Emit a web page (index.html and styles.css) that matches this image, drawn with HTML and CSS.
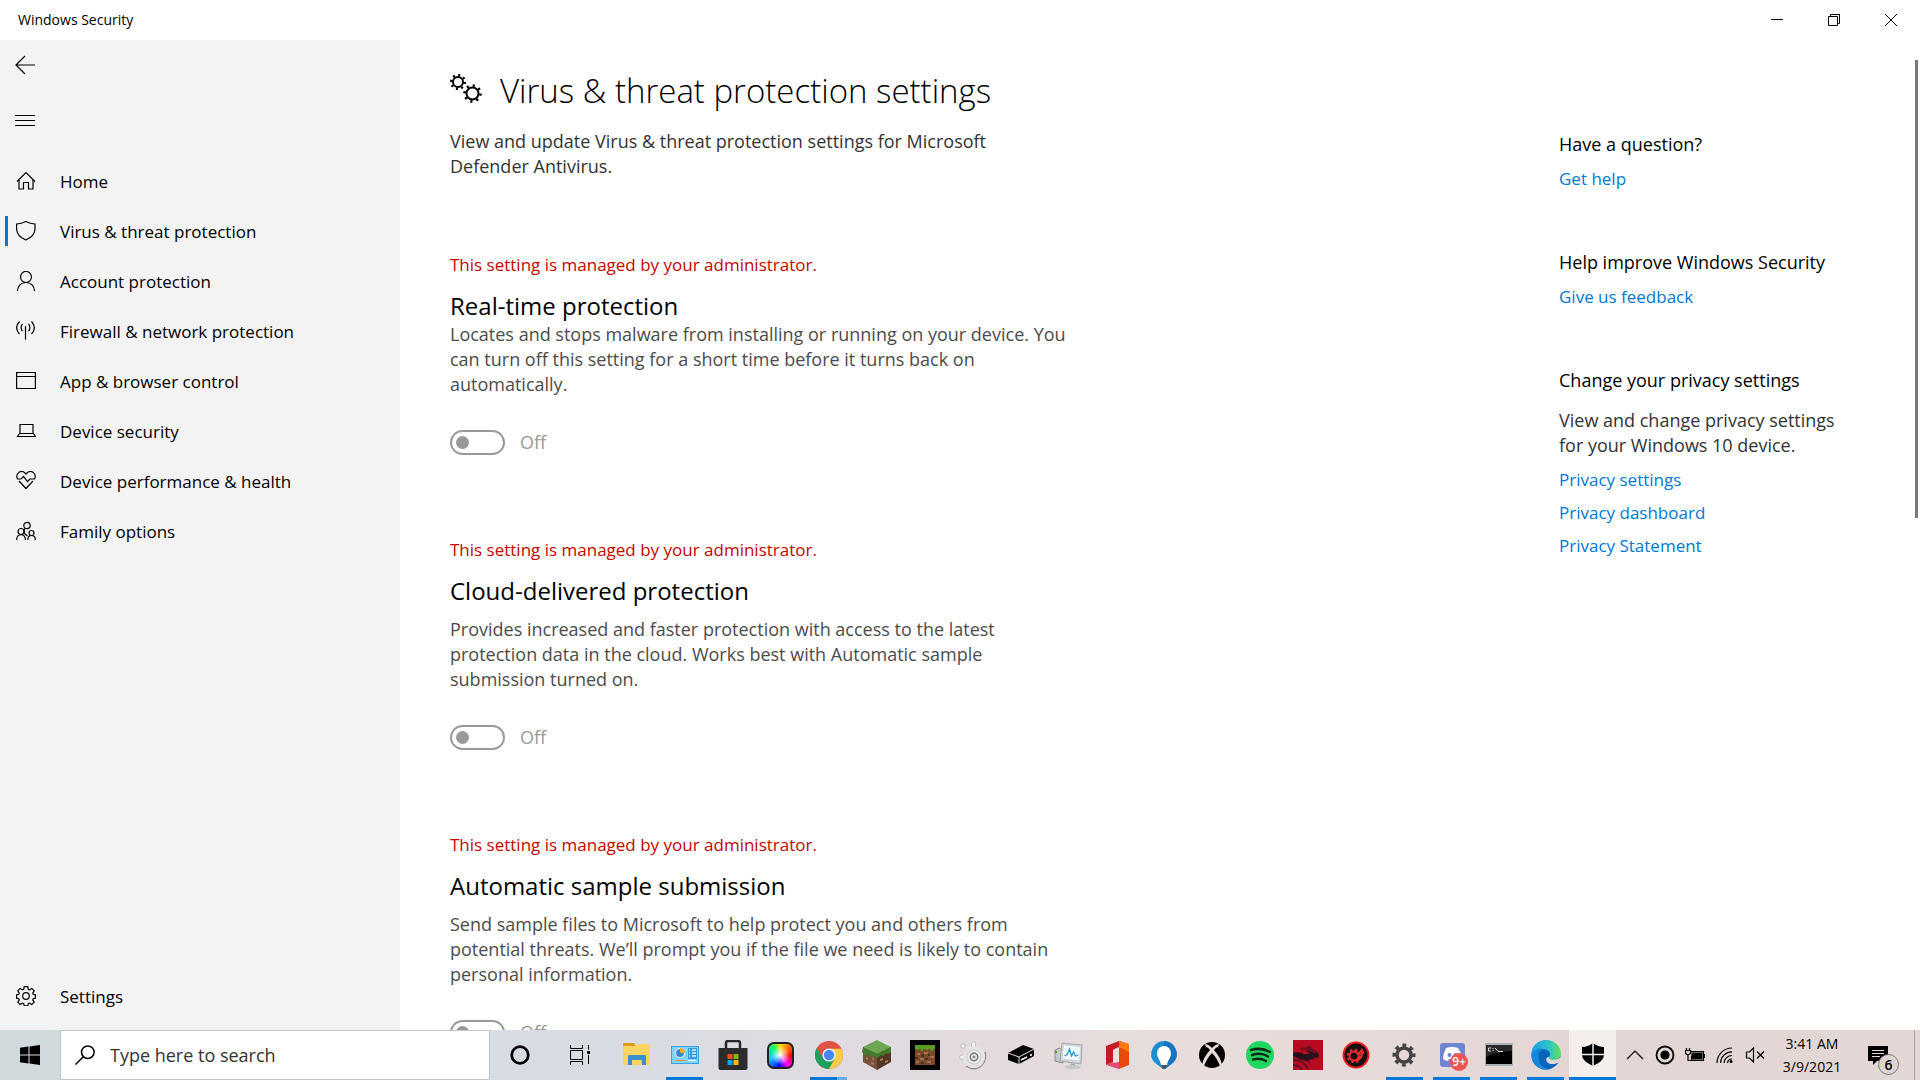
FILE: index.html
```
<!DOCTYPE html>
<html lang="en">
<head>
    <meta charset="UTF-8">
    <meta name="viewport" content="width=device-width, initial-scale=1.0">
    <title>Windows Security</title>
    <link rel="stylesheet" href="styles.css">
</head>
<body>
    <header class="titlebar">
        <span class="titlebar-text">Windows Security</span>
        <button class="window-btn" aria-label="Minimize"><svg width="12" height="12" viewBox="0 0 12 12"><path d="M0 5.5h12"/></svg></button>
        <button class="window-btn" aria-label="Restore"><svg width="12" height="12" viewBox="0 0 12 12"><path d="M.5 2.5h9v9h-9zM2.5 2.5v-2h9v9h-2"/></svg></button>
        <button class="window-btn" aria-label="Close"><svg width="12" height="12" viewBox="0 0 12 12"><path d="M0 0l12 12M12 0L0 12"/></svg></button>
    </header>

    <div class="window">
        <nav class="sidebar">
            <button class="nav-btn" aria-label="Back"><svg width="20" height="20" viewBox="0 0 20 20"><path d="M20 10H1M10 1l-9 9 9 9"/></svg></button>
            <button class="nav-btn menu-btn" aria-label="Menu"><svg width="20" height="20" viewBox="0 0 20 20"><path d="M0 4.500h20M0 9.500h20M0 14.500h20"/></svg></button>

            <a class="nav-item" href="#">
                <svg width="20" height="20" viewBox="0 0 20 20"><path d="M1 10.500L10 1.500l9 9M3 9v9h4.500v-6.500h5V18H17V9"/></svg>
                Home
            </a>
            <a class="nav-item selected" href="#">
                <svg width="20" height="20" viewBox="0 0 20 20"><path d="M.6 3C4.500 3 7 2.200 9.800.6c2.800 1.600 5.300 2.400 9.200 2.400v5c0 5-3.500 8.500-9.200 11C4.100 16.500.6 13 .6 8z"/></svg>
                Virus &amp; threat protection
            </a>
            <a class="nav-item" href="#">
                <svg width="20" height="20" viewBox="0 0 20 20"><circle cx="10" cy="6" r="5.500"/><path d="M1.500 20c0-5 3.500-8.500 8.500-8.500s8.500 3.500 8.500 8.500"/></svg>
                Account protection
            </a>
            <a class="nav-item" href="#">
                <svg width="20" height="20" viewBox="0 0 20 20"><path d="M9.500 5v13.500M6.500 3a5 5 0 0 0 0 7M12.500 3a5 5 0 0 1 0 7M3.500 .5C-.2 4.500-.2 9 3.500 13M15.500 .5c3.700 4 3.700 8.500 0 12.500"/></svg>
                Firewall &amp; network protection
            </a>
            <a class="nav-item" href="#">
                <svg width="20" height="20" viewBox="0 0 20 20"><path d="M.6 1.500h18.800v16H.6zM.6 5.500h18.800"/></svg>
                App &amp; browser control
            </a>
            <a class="nav-item" href="#">
                <svg width="20" height="20" viewBox="0 0 20 20"><path d="M4 3.500h13v9H4zM3.500 12.500l-2 3h18l-2-3M1.500 15.500h18"/></svg>
                Device security
            </a>
            <a class="nav-item" href="#">
                <svg width="20" height="20" viewBox="0 0 20 20"><path d="M1.500 8C-1 3 5-3 10 3c5-6 11 0 8.500 5M3 10l7 7.500 7-7.500M1 8h4l2.500-2.500 4 5L14 8h5"/></svg>
                Device performance &amp; health
            </a>
            <a class="nav-item" href="#">
                <svg width="20" height="20" viewBox="0 0 20 20"><circle cx="11" cy="4.500" r="3.200"/><circle cx="5" cy="10.500" r="3"/><circle cx="15.500" cy="12" r="2.500"/><path d="M.6 19c0-7.300 8.800-7.300 8.800 0M11.800 19c0-6 7.600-6 7.600 0M9 7.500C7.500 9 8 11 9 13l2.500 2"/></svg>
                Family options
            </a>
            <a class="nav-item settings-item" href="#">
                <svg width="20" height="20" viewBox="0 0 20 20"><path d="M8.200.7h3.600l.5 2.700 1.200.5 2.300-1.500 2.400 2.400-1.500 2.300.5 1.200 2.200.5v3.400l-2.200.5-.5 1.200 1.500 2.300-2.400 2.400-2.300-1.500-1.200.5-.5 2.200H8.200l-.5-2.200-1.200-.5-2.300 1.500-2.400-2.400 1.500-2.300-.5-1.200-2.200-.5V8.800l2.200-.5.5-1.200-1.500-2.300 2.400-2.400 2.300 1.500 1.200-.5z"/><circle cx="10" cy="10" r="3.300"/></svg>
                Settings
            </a>
        </nav>

        <main class="content">
            <section class="settings">
                <h1>
                    <svg width="32" height="34" viewBox="0 0 32 34"><g fill="none" stroke="#000"><circle cx="8" cy="8" r="5" stroke-width="2"/><circle cx="8" cy="8" r="6.800" stroke-width="2.500" stroke-dasharray="2 3.340"/><circle cx="22.500" cy="19.500" r="6" stroke-width="2"/><circle cx="22.500" cy="19.500" r="8" stroke-width="2.500" stroke-dasharray="2.200 4.080"/></g></svg>
                    Virus &amp; threat protection settings
                </h1>
                <p class="intro">View and update Virus &amp; threat protection settings for Microsoft Defender Antivirus.</p>

                <article class="setting compact">
                    <p class="managed">This setting is managed by your administrator.</p>
                    <h2>Real-time protection</h2>
                    <p class="description">Locates and stops malware from installing or running on your device. You can turn off this setting for a short time before it turns back on automatically.</p>
                    <label class="toggle"><input type="checkbox" disabled>Off</label>
                </article>

                <article class="setting">
                    <p class="managed">This setting is managed by your administrator.</p>
                    <h2>Cloud-delivered protection</h2>
                    <p class="description">Provides increased and faster protection with access to the latest protection data in the cloud. Works best with Automatic sample submission turned on.</p>
                    <label class="toggle"><input type="checkbox" disabled>Off</label>
                </article>

                <article class="setting">
                    <p class="managed">This setting is managed by your administrator.</p>
                    <h2>Automatic sample submission</h2>
                    <p class="description">Send sample files to Microsoft to help protect you and others from potential threats. We’ll prompt you if the file we need is likely to contain personal information.</p>
                    <label class="toggle"><input type="checkbox" disabled>Off</label>
                </article>
            </section>

            <aside class="help">
                <section>
                    <h3>Have a question?</h3>
                    <a href="#">Get help</a>
                </section>
                <section>
                    <h3>Help improve Windows Security</h3>
                    <a href="#">Give us feedback</a>
                </section>
                <section>
                    <h3>Change your privacy settings</h3>
                    <p>View and change privacy settings for your Windows 10 device.</p>
                    <a href="#">Privacy settings</a>
                    <a href="#">Privacy dashboard</a>
                    <a href="#">Privacy Statement</a>
                </section>
            </aside>
            <div class="scrollbar"></div>
        </main>
    </div>

    <footer class="taskbar">
        <button class="start" aria-label="Start"><svg width="20" height="20" viewBox="0 0 20 20"><path d="M0 2.800l8.500-1.200v8H0zM9.500 1.400L20 0v9.600H9.500zM0 10.500h8.500v8L0 17.300zM9.500 10.500H20V20L9.500 18.600z"/></svg></button>
        <label class="search">
            <svg width="20" height="20" viewBox="0 0 20 20"><circle cx="12.800" cy="7.200" r="6.300"/><path d="M8.300 11.700L.5 19.500"/></svg>
            <input type="text" placeholder="Type here to search" aria-label="Search">
        </label>
        <button class="tool" aria-label="Cortana"><svg width="20" height="20" viewBox="0 0 20 20"><circle cx="10" cy="10" r="8.300" fill="none" stroke="#000" stroke-width="2.800"/></svg></button>
        <button class="tool" aria-label="Task View"><svg width="20" height="20" viewBox="0 0 20 20"><path d="M.5 0v3.500h12V0M.5 20v-3.500h12V20M.5 5.500h12v9H.5zM18.500 0v4.500M18.500 10v9" fill="none" stroke="#000"/><path d="M17 6h3v3h-3z"/></svg></button>

        <div class="apps">
            <button aria-label="File Explorer"><svg width="30" height="30" viewBox="0 0 30 30"><path d="M1 6V4q0-1 1-1h10l2 3z" fill="#dc9b14"/><path d="M1 6h12l2-2h13v21H1z" fill="#ffd460"/><path d="M6 25V16q0-1 1-1h16q1 0 1 1v9h-4v-5H10v5z" fill="#3d8fd1"/></svg></button>
            <button class="open" aria-label="Control Panel"><svg width="30" height="30" viewBox="0 0 30 30"><path d="M1 6h28v18H1z" fill="#3ca0d9"/><path d="M2 7h26v16H2z" fill="#80d4fb"/><circle cx="10" cy="13" r="5" fill="#fff"/><circle cx="10" cy="13" r="4" fill="#2d8bd0"/><path d="M10 13V8a5 5 0 0 1 5 5z" fill="#ffa530"/><path d="M18 8h9v11h-9z" fill="#359bdb"/><path d="M19 10h1M22 10h4M19 13h1M22 13h4M19 16h1M22 16h4" stroke="#d9f5ff" stroke-width="1.500"/><path d="M5 20.500h11" stroke="#f29428"/><path d="M18 20.500h8" stroke="#fff"/></svg></button>
            <button aria-label="Microsoft Store"><svg width="30" height="30" viewBox="0 0 30 30"><path d="M8 9V3q0-2 2-2h10q2 0 2 2v6" fill="none" stroke="#292929" stroke-width="2.500"/><path d="M.5 8h29v20q0 2-2 2h-25q-2 0-2-2z" fill="#2b2b2b"/><path d="M9.500 14h5v5h-5z" fill="#f25022"/><path d="M15.500 14h5v5h-5z" fill="#7fba00"/><path d="M9.500 20h5v5h-5z" fill="#00a4ef"/><path d="M15.500 20h5v5h-5z" fill="#ffb900"/></svg></button>
            <button aria-label="Lighting"><span class="rainbow"></span></button>
            <button class="open grouped" aria-label="Google Chrome"><svg width="30" height="30" viewBox="0 0 30 30"><circle cx="15" cy="15" r="14" fill="#de5145"/><path d="M2.880 8A14 14 0 0 0 15 29l6-10.500-6-3.500-6 3.500z" fill="#1aa15f"/><path d="M15 29A14 14 0 0 0 27.500 8.700H15l6 9.800z" fill="#ffce44"/><circle cx="15" cy="15" r="6.600" fill="#f5f5f5"/><circle cx="15" cy="15" r="5.200" fill="#4688f1"/></svg></button>
            <button aria-label="Minecraft Launcher"><svg width="30" height="30" viewBox="0 0 30 30"><path d="M1 7l14 6v17L1 22z" fill="#76523b"/><path d="M29 7l-14 6v17l14-8z" fill="#553824"/><path d="M15 0l14 7-14 7L1 7z" fill="#6da651"/><path d="M1 7l14 7 14-7v5l-3 2-2-1-3 3-2-1-4 3-3-2-3 1-3-3-3 1-3-3z" fill="#407d2e"/><path d="M4 17l2 1v2l-2-1zM9 22l3 1v2l-3-1zM10 17l2 1v2l-2-1zM18 19l3-1v2l-3 1zM23 21l3-1v2l-3 1z" fill="#a57c5d"/></svg></button>
            <button aria-label="Minecraft"><svg width="30" height="30" viewBox="0 0 30 30"><path d="M0 0h30v30H0z"/><path d="M5 5h20v20H5z" fill="#7b4b2c"/><path d="M7 13h3v2H7zM14 12h4v2h-4zM20 16h4v2h-4zM10 18h4v2h-4zM6 21h3v2H6zM17 21h4v2h-4z" fill="#a8703f"/><path d="M11 14h3v3h-3zM18 14h2v2h-2zM5 17h3v2H5zM15 18h3v2h-3zM11 22h3v2h-3z" fill="#4e2f1c"/><path d="M5 5h20v4h-2v2h-2V9h-3v1h-2V9h-3v2h-2V9H9v1H7V9H5z" fill="#589b25"/></svg></button>
            <button aria-label="SteelSeries Engine"><svg width="30" height="30" viewBox="0 0 30 30"><path d="M8 26q9 6 16-1 5-6 3-13" fill="none" stroke="#8d8a8a" stroke-width="1.500"/><g fill="#f2f2f2" stroke="#bcbcbc"><path d="M13.500 8V3.500q0-2 2-2t2 2V8M7 15H3q-3 2 0 4.500h4"/><circle cx="5" cy="6" r="2.200"/></g><circle cx="16" cy="17" r="11" fill="#e4e4e4"/><circle cx="16" cy="17" r="7.500" fill="#c4c4c4"/><circle cx="16" cy="17" r="6.500" fill="#f5f5f5"/><circle cx="16" cy="17" r="3.800" fill="#eee" stroke="#7f7f7f" stroke-width="1.800"/><circle cx="16" cy="17" r="1.500" fill="#888"/></svg></button>
            <button aria-label="Drive"><svg width="30" height="30" viewBox="0 0 30 30"><path d="M2 13L17 5l11 4v7l-15 8-11-4z"/><path d="M2 13l11 4 15-8M13 17v7" fill="none" stroke="#e5dddd"/><path d="M15 20l6-3M24 15.500l2-1" stroke="#fff" stroke-width="1.500"/></svg></button>
            <button aria-label="Performance Monitor"><svg width="30" height="30" viewBox="0 0 30 30"><path d="M1 10l4-2 4 2v13l-8-2z" fill="#c3c9cb" stroke="#858b8d"/><path d="M8 3l20 2-1 19-21-3z" fill="#cfd5d7" stroke="#a3a9ab"/><path d="M10 5.500l16 1.500-1 13.500-16.500-2z" fill="#eefaff"/><path d="M10.500 16l3-2 2-5 2 7 2-4 2 4 3-1" fill="none" stroke="#269bd0" stroke-width="1.300"/><path d="M17 23l4 1v3h-5z" fill="#a8adb0"/><ellipse cx="19" cy="27" rx="8" ry="2" fill="#c5c8ca"/><path d="M1 12h2" stroke="#49a02c" stroke-width="2"/></svg></button>
            <button aria-label="Office"><svg width="30" height="30" viewBox="0 0 30 30"><path d="M4 6L17 1l6 2-6 4-6 3v12l-7 3z" fill="#c51a27"/><path d="M17 1l10 3v21l-10 4z" fill="#e84a0c"/><path d="M17 1l10 3v8L17 7z" fill="#fb7a16"/><path d="M4 25l7-3h6v7z" fill="#e14b75"/><path d="M11 10l6-3v15l-6 1z" fill="#eee1dd"/></svg></button>
            <button aria-label="Tips"><svg width="30" height="30" viewBox="0 0 30 30"><path d="M15 1a13 13 0 0 1 10 21L16 29h-2L5 22A13 13 0 0 1 15 1z" fill="#198fd2"/><path d="M15 1a13 13 0 0 1 10 21L16 29l-1-1z" fill="#1464b4" opacity=".6"/><path d="M8 13a7 7 0 0 1 14 0c0 5-3 6-4 12h-6C11 19 8 18 8 13z" fill="#fff"/><path d="M12 25h6l-2 4h-2z" fill="#4b5258"/></svg></button>
            <button aria-label="Xbox"><svg width="30" height="30" viewBox="0 0 30 30"><circle cx="15" cy="15" r="13"/><path d="M8 4Q11 4 15 8q4-4 7-4l-1 3q-2 0-4 3 7 8 8 15l-2 1Q20 18 15 13 10 18 7 26l-2-1q1-7 8-15-2-3-4-3z" fill="#e7dcda"/></svg></button>
            <button aria-label="Spotify"><svg width="30" height="30" viewBox="0 0 30 30"><circle cx="15" cy="15" r="14" fill="#1ed760"/><path d="M6 10q10-3 19 2M7 15q9-3 16 1.500M8 19.500q7-2 13 1.500" fill="none" stroke="#132918" stroke-width="2.500" stroke-linecap="round"/></svg></button>
            <button aria-label="Kali Linux"><svg width="30" height="30" viewBox="0 0 30 30"><path d="M0 0h30v30H0z" fill="#b80a20"/><path d="M0 13q7-2 11 1h6l-5-4q6 0 9 3l2-2 3 4-1 3-5-1 2 2-7 1 7 9q-6-9-13-9L0 16z" fill="#28121e"/><path d="M8 9q8-2 13 2M15 6l8 7M0 20q10-1 15 9M0 25q7 0 9 5" fill="none" stroke="#641025" stroke-width="2"/></svg></button>
            <button aria-label="Game Booster"><svg width="30" height="30" viewBox="0 0 30 30"><circle cx="15" cy="15" r="12.500" fill="#111" stroke="#ff171c" stroke-width="2"/><circle cx="13" cy="16" r="4.500" fill="none" stroke="#f52b31" stroke-width="2"/><circle cx="13" cy="16" r="6.300" fill="none" stroke="#f52b31" stroke-width="2" stroke-dasharray="2.500 2.450"/><path d="M15 19q6-2 5-7l-3 1 4-5 3 6-2-1q0 6-6 9z" fill="#f52b31"/></svg></button>
            <button class="open" aria-label="Settings"><svg width="30" height="30" viewBox="0 0 30 30"><g fill="none" stroke="#444"><circle cx="15" cy="15" r="7" stroke-width="3.500"/><circle cx="15" cy="15" r="9.500" stroke-width="4" stroke-dasharray="3.700 3.760" stroke-dashoffset="1.850"/></g></svg></button>
            <button class="open narrow" aria-label="Discord">
                <svg width="30" height="30" viewBox="0 0 30 30"><rect x="3" y="3" width="25" height="24" rx="3" fill="#6f85cf"/><path d="M9 8q6-2 12 0 4 6 4 11-3 2-5 2l-1-2h-7l-1 2q-3 0-5-2 0-5 3-11z" fill="#fff"/><circle cx="12.500" cy="15" r="2" fill="#6f85cf"/><circle cx="18.500" cy="15" r="2" fill="#6f85cf"/></svg>
                <span class="badge">9+</span>
            </button>
            <button class="open narrow" aria-label="Command Prompt"><svg width="30" height="30" viewBox="0 0 30 30"><path d="M1 3h28v23H1z" fill="#a9b1b6"/><path d="M2 5h26v19H2z"/><path d="M2 5h26v6Q10 12 2 17z" fill="#292929"/><path d="M7 8H4.500v3H7M9 8v1M9 10v1M11 8l3 3M14 11.500h5" stroke="#ddd" fill="none"/></svg></button>
            <button class="open narrow" aria-label="Microsoft Edge"><svg width="30" height="30" viewBox="0 0 30 30"><defs><linearGradient id="edgeTop"><stop stop-color="#1b9ee5"/><stop offset=".6" stop-color="#2dc5c5"/><stop offset="1" stop-color="#68e250"/></linearGradient></defs><circle cx="15" cy="15" r="14.500" fill="#0c63ba"/><path d="M.5 15C0 5 8 0 15 0c9 0 15 7 15 13 0 5-4 7-8 7-3 0-5-1-4-3 3-4-1-8-6-8C5 9 1 13 .5 15z" fill="url(#edgeTop)"/><path d="M.5 15C2 10 7 8 12 9c-4 2-6 7-4 12 2 6 7 8 11 8-10 3-19-5-18.500-14z" fill="#1288dc"/><path d="M18 17c-4 0-4 6 2 7 4 .500 7-1 8-2l2-5-3 2c-3 1-9 2-9-2z" fill="#e4d8d7"/></svg></button>
            <button class="current narrow" aria-label="Windows Security"><svg width="30" height="30" viewBox="0 0 30 30"><path d="M4 7q6 0 11-4 5 4 11 4v8q0 6-11 11Q4 21 4 15z"/><path d="M15 3v23M4 14.500h22" stroke="#f4efed" stroke-width="1.500"/></svg></button>
        </div>

        <div class="tray">
            <button aria-label="Show hidden icons"><svg width="20" height="20" viewBox="0 0 20 20"><path d="M2 14l8-8 8 8"/></svg></button>
            <button aria-label="Recording"><svg width="20" height="20" viewBox="0 0 20 20"><circle cx="10" cy="10" r="8.500" stroke-width="1.800"/><circle cx="10" cy="10" r="4" fill="#000"/></svg></button>
            <button aria-label="Battery"><svg width="20" height="20" viewBox="0 0 20 20"><path d="M5 6.500h13.500v9h-12V11M19.500 9v4M1.500 3v2M4.500 3v2M.5 5.500h5v3L3 10 .5 8.500zM3 10v5.500h3"/><path d="M7 8h10v6H7z" fill="#000"/></svg></button>
            <button aria-label="Wi-Fi"><svg width="20" height="20" viewBox="0 0 20 20"><path d="M2 18A15 15 0 0 1 17 3M5.500 18A11.500 11.500 0 0 1 17 6.800M9 18a8 8 0 0 1 8-7.500M12.500 18a4.500 4.500 0 0 1 4.500-4"/><circle cx="16" cy="16.500" r="1.500" fill="#000" stroke="none"/></svg></button>
            <button aria-label="Volume muted"><svg width="20" height="20" viewBox="0 0 20 20"><path d="M1.500 7h3l4-4v14l-4-4h-3zM12 6.500l7 7M19 6.500l-7 7"/></svg></button>
        </div>
        <time class="clock" datetime="2021-03-09T03:41">3:41 AM<br>3/9/2021</time>
        <button class="notifications" aria-label="Notifications">
            <svg width="20" height="20" viewBox="0 0 20 20"><path d="M0 1h20v15H9l-4 4v-4H0z"/><path d="M4 5.500h12M4 8.500h12M4 11.500h8" stroke="#e6d9d7"/></svg>
            <span class="count">6</span>
        </button>
    </footer>
</body>
</html>
```
FILE: styles.css
```
* {
    box-sizing: border-box;
}
body {
    display: flex;
    flex-direction: column;
    height: 100vh;
    margin: 0;
    overflow: hidden;
    background: #fff;
    color: #000;
    font-family: "Open Sans", "Noto Sans", sans-serif;
    font-size: 18px;
    line-height: 25px;
}
h1, h2, h3, p {
    margin: 0;
    font-weight: normal;
}
h2 {
    font-size: 24px;
    line-height: 32px;
}
h3 {
    font-size: 18px;
}
a {
    color: #0078d7;
    font-size: 17px;
    text-decoration: none;
}
button {
    display: flex;
    align-items: center;
    justify-content: center;
    padding: 0;
    border: 0;
    background: none;
    font: inherit;
}
svg {
    display: block;
    flex: none;
}

/* Title bar */
.titlebar {
    display: flex;
    flex: none;
    height: 40px;
    padding: 0 1px 0 18px;
    font-size: 14px;
    line-height: 40px;
}
.titlebar-text {
    flex: 1;
}
.window-btn {
    width: 57px;
    height: 40px;
}
.window-btn svg {
    fill: none;
    stroke: #000;
}

/* Sidebar */
.window {
    display: flex;
    flex: 1;
    min-height: 0;
}
.sidebar {
    display: flex;
    flex: none;
    flex-direction: column;
    width: 400px;
    padding-bottom: 9px;
    background: #f3f3f3;
}
.sidebar svg {
    fill: none;
    stroke: #000;
    stroke-width: 1.2;
}
.nav-btn {
    width: 50px;
    height: 50px;
}
.menu-btn {
    height: 62px;
    margin-bottom: 4px;
}
.nav-btn.menu-btn svg {
    stroke-width: 1;
}
.nav-item {
    display: flex;
    align-items: center;
    gap: 24px;
    height: 50px;
    padding-left: 16px;
    color: #000;
}
.selected {
    background: linear-gradient(#0078d7, #0078d7) 5px center / 3px 30px no-repeat;
}
.settings-item {
    margin-top: auto;
}

/* Main content */
.content {
    display: flex;
    flex: 1;
    justify-content: space-between;
    padding-left: 50px;
    overflow: hidden;
}
.settings {
    width: 620px;
    padding-top: 28px;
}
h1 {
    display: flex;
    align-items: center;
    gap: 18px;
    font-size: 33px;
    font-weight: 300;
    line-height: 46px;
}
.intro {
    width: 560px;
    margin: 15px 0 73px;
    color: #333;
}
.setting {
    height: 295px;
}
.compact {
    height: 285px;
}
.managed {
    margin-bottom: 13px;
    color: #c50500;
    font-size: 17px;
}
.description {
    margin: 10px 0 33px;
    color: #4c4c4c;
}
.compact .description {
    margin-top: 0;
}
.toggle {
    display: flex;
    align-items: center;
    gap: 15px;
    color: #999;
}
.toggle input {
    display: flex;
    align-items: center;
    width: 55px;
    height: 25px;
    margin: 0;
    padding-left: 4px;
    border: 2px solid #999;
    border-radius: 13px;
    appearance: none;
}
.toggle input::before {
    width: 13px;
    height: 13px;
    border-radius: 50%;
    background: #999;
    content: "";
}
.help {
    width: 300px;
    margin-left: auto;
    padding-top: 92px;
}
.help section {
    margin-bottom: 59px;
}
.help h3 {
    margin-bottom: 9px;
}
.help p {
    margin: 15px 0 9px;
    color: #333;
}
.help a {
    display: block;
    margin-bottom: 8px;
}
.scrollbar {
    width: 3px;
    height: 458px;
    margin: 20px 2px 0 56px;
    background: #7a7a7a;
}

/* Taskbar */
.taskbar {
    display: flex;
    flex: none;
    height: 50px;
    background: linear-gradient(90deg, #d0dadd, #d9dde3 35%, #e2dadf 50%, #e8ddda 62%, #e3d5d4 85%, #e3d7d6);
}
.start {
    width: 60px;
}
.search {
    display: flex;
    align-items: center;
    gap: 15px;
    width: 430px;
    padding-left: 14px;
    border: 1px solid #c5c5c5;
    background: #fff;
}
.search svg {
    fill: none;
    stroke: #000;
    stroke-width: 1.5;
}
.search input {
    flex: 1;
    min-width: 0;
    padding: 0;
    border: 0;
    outline: 0;
    font: inherit;
}
.search input::placeholder {
    color: #333;
    opacity: 1;
}
.tool {
    width: 60px;
}
.apps {
    display: flex;
    flex: 1;
    padding-left: 3px;
}
.apps button {
    position: relative;
    flex: 0 1 48px;
}
.apps .narrow {
    flex-basis: 47px;
}
.open {
    background: linear-gradient(#0078d7, #0078d7) center bottom / 37px 3px no-repeat;
}
.grouped {
    background: linear-gradient(90deg, #0078d7 27px, #66aee8 27px) center bottom / 37px 3px no-repeat;
}
.current {
    border-bottom: 3px solid #0078d7;
    border-top: 3px solid #f4efed;
    background: #f4efed;
}
.rainbow {
    width: 27px;
    height: 27px;
    border: 2px solid #222;
    border-radius: 7px;
    background: radial-gradient(#fff, transparent 60%), conic-gradient(#fd0, red 25%, #f0f 40%, #00f 52%, #0cf 70%, #0f6 88%, #fd0);
}
.badge {
    position: absolute;
    right: 7px;
    bottom: 9px;
    width: 18px;
    height: 18px;
    border-radius: 50%;
    background: #ee5454;
    color: #fff;
    font-size: 12px;
    font-weight: 600;
    line-height: 18px;
}
.tray {
    display: flex;
    padding-left: 4px;
}
.tray button {
    width: 30px;
}
.tray svg {
    fill: none;
    stroke: #000;
    stroke-width: 1.2;
}
.clock {
    width: 84px;
    padding-top: 2px;
    font-size: 14px;
    line-height: 23px;
    text-align: center;
}
.notifications {
    position: relative;
    width: 61px;
    margin-right: 5px;
    border-right: 1px solid #aaa0a0;
}
.notifications svg {
    margin-right: 12px;
}
.count {
    position: absolute;
    right: 15px;
    bottom: 5px;
    width: 21px;
    height: 21px;
    border: 1px solid #777;
    border-radius: 50%;
    background: #dcd5d3;
    font-size: 14px;
    font-weight: 600;
    line-height: 19px;
}
```
